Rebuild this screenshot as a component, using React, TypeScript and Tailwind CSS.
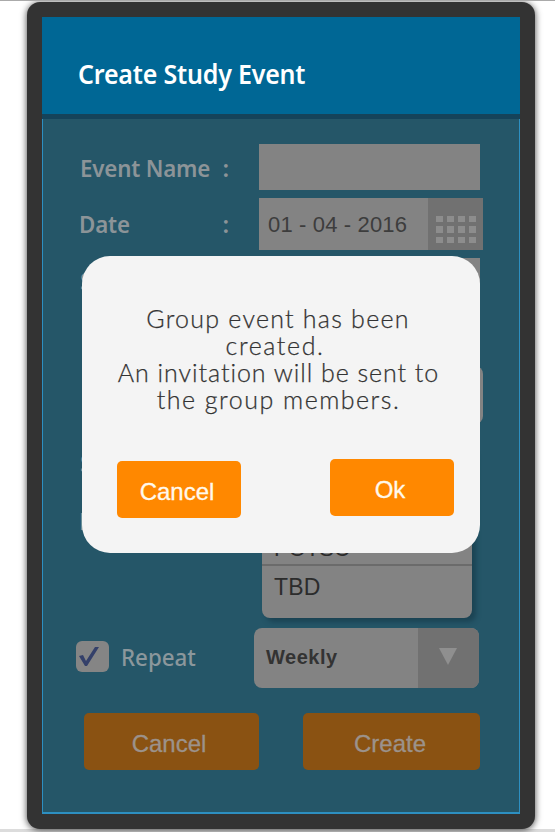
function Label({ text, className = "" }: { text: string; className?: string }) {
  return (
    <div className={`flex shrink-0 justify-between text-[24px] leading-[34px] font-semibold text-[#8c9498] ${className}`}>
      <span className="origin-left scale-x-[0.93] whitespace-nowrap tracking-[-0.2px]">{text}</span>
      <span>:</span>
    </div>
  );
}

function HiddenLabel({ text, className = "" }: { text: string; className?: string }) {
  return <div className={`w-[151px] shrink-0 text-[23px] leading-[34px] font-semibold text-[#8c9498] ${className}`}>{text}</div>;
}

function CalendarGrid() {
  return (
    <div className="flex h-[52px] w-[55px] items-end bg-[#717171] pb-[7px] pl-[8px]">
      <div className="grid grid-cols-4 gap-x-[4.5px] gap-y-[4px]">
        {Array.from({ length: 12 }, (_, i) => (
          <span key={i} className="h-[6.5px] w-[6.5px] bg-[#8d8d8d]" />
        ))}
      </div>
    </div>
  );
}

function StudyForm() {
  return (
    <div className="flex h-[695px] flex-col border-x border-b-2 border-[#2d8fc1] bg-[#255668] pt-[25px]">
      <div className="flex h-[46px] pl-[37px]">
        <Label text="Event Name" className="w-[149px] pt-[7px]" />
        <div className="ml-[30px] h-[46px] w-[221px] bg-[#838383]" />
      </div>
      <div className="mt-[8px] flex h-[52px] pl-[36px]">
        <Label text="Date" className="w-[150px] pt-[9px]" />
        <div className="ml-[30px] flex w-[224px] bg-[#838383]">
          <div className="w-[169px] pl-[9px] font-['Liberation_Sans',sans-serif] text-[22px] leading-[53px] tracking-[0.15px] whitespace-nowrap text-[#3d3d3d]">01 - 04 - 2016</div>
          <CalendarGrid />
        </div>
      </div>
      <div className="mt-[8px] flex h-[52px] pl-[37px]">
        <HiddenLabel text="Start" className="pt-[6px]" />
        <div className="ml-[28px] w-[221px] bg-[#838383]" />
      </div>
      <div className="mt-[56px] flex h-[58px] justify-end pr-[36px]">
        <div className="w-[224px] rounded-lg bg-[#838383]" />
      </div>
      <div className="mt-[20px] flex h-[174px] pl-[37px]">
        <div className="pt-[2px]">
          <HiddenLabel text="Subject" />
          <HiddenLabel text="Place" className="-ml-[1px] mt-[24px]" />
        </div>
        <div className="mt-[2px] ml-[31px] h-[172px] w-[210px] rounded-lg bg-[#838383] pt-[86px] font-['Liberation_Sans',sans-serif] text-[#2c2c2c] shadow-[4px_4px_5px_#1b4353]">
          <div className="h-[34px] border-b-2 border-[#6b6b6b] pl-[12px] text-[22px] leading-[34px]">POTSC</div>
          <div className="pl-[12px] text-[23px] leading-[42px] tracking-[0.2px]">TBD</div>
        </div>
      </div>
      <div className="mt-[10px] flex h-[60px] pl-[33px]">
        <div className="mt-[13px] flex h-[31px] w-[33px] justify-center rounded-md bg-[#858585] pt-[3px]">
          <svg viewBox="0 0 33 28" className="h-[28px] w-[33px]" fill="#34406a"><path d="M3 12l4-1 3 6L19 3h4L11 22H9z" /></svg>
        </div>
        <div className="ml-[12px] w-[133px] pt-[12px] text-[24px] leading-[34px] font-medium text-[#8b979c]"><span className="inline-block origin-left scale-x-[0.93]">Repeat</span></div>
        <div className="flex w-[225px] overflow-hidden rounded-lg bg-[#838383]">
          <div className="w-[164px] pl-[12px] font-['Liberation_Sans',sans-serif] text-[20px] leading-[58px] font-bold tracking-[0.5px] text-[#333]">Weekly</div>
          <div className="flex w-[61px] justify-center bg-[#717171] pt-[20px] pr-[2px]">
            <svg viewBox="0 0 18 17" className="h-[17px] w-[18px]" fill="#8f8f8f"><path d="M0 0h18L9 17z" /></svg>
          </div>
        </div>
      </div>
      <div className="mt-[25px] flex justify-between pr-[39px] pl-[41px] font-['Liberation_Sans',sans-serif] text-[24px] leading-[62px] text-[#9c928b] [-webkit-text-stroke:0.3px_#9c928b]">
        <button className="h-[57px] w-[175px] rounded-[5px] bg-[#8a5212] pr-[5px]">Cancel</button>
        <button className="h-[57px] w-[177px] rounded-[5px] bg-[#8a5212] pr-[3px]">Create</button>
      </div>
    </div>
  );
}

function Confirmation() {
  return (
    <div className="absolute top-[239px] left-[40px] h-[297px] w-[398px] rounded-[28px] bg-[#f4f4f4] pt-[49px]">
      <div className="flex flex-col items-center font-['Lato',sans-serif] text-[25px] leading-[27px] font-light whitespace-nowrap text-[#333] [-webkit-text-stroke:0.25px_#333]">
        <p className="pr-[6px] tracking-[1.25px]">Group event has been</p>
        <p className="pr-[12px] tracking-[1.6px]">created.</p>
        <p className="pr-[5px] tracking-[0.95px]">An invitation will be sent to</p>
        <p className="pr-[5px] tracking-[1.5px]">the group members.</p>
      </div>
      <div className="mt-[46px] flex justify-between pr-[26px] pl-[35px] font-['Liberation_Sans',sans-serif] text-[24px] leading-[61px] text-[#fff9ed] [-webkit-text-stroke:0.3px_#fff9ed]">
        <button className="mt-[2px] h-[57px] w-[124px] rounded-[5px] bg-[#ff8800] pr-[4px]">Cancel</button>
        <button className="h-[57px] w-[124px] rounded-[5px] bg-[#ff8800] pr-[4px]">Ok</button>
      </div>
    </div>
  );
}

export default function App() {
  return (
    <main className="h-[832px] w-[555px] overflow-hidden border-t border-[#aaa] bg-white bg-[linear-gradient(#dcdcdc,#dcdcdc)] bg-[length:100%_3px] bg-bottom bg-no-repeat pt-[1px] pl-[27px] font-['Noto_Sans',sans-serif]">
      <div className="h-[827px] w-[508px] rounded-[13px] bg-[#333] pt-[15px] pl-[15px] shadow-[0_1px_7px_#444]">
        <div className="relative w-[478px]">
          <header className="h-[102px] border-b-[5px] border-[#15435a] bg-[#006795] pt-[37px] pl-[36px] text-[27px] leading-[40px] font-semibold text-white">
            <span className="inline-block origin-left scale-x-[0.925] whitespace-nowrap tracking-[-0.2px]">Create Study Event</span>
          </header>
          <StudyForm />
          <Confirmation />
        </div>
      </div>
    </main>
  );
}
